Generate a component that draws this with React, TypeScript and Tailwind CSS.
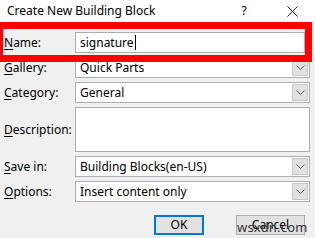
import React from "react";

const font = { fontFamily: '"Noto Sans", "Open Sans", sans-serif' };

function Label({ u, rest }: { u: string; rest: string }) {
  return (
    <div className="w-[71px] shrink-0 text-[12px] text-[#000] leading-none">
      <span className="underline underline-offset-[2px]">{u}</span>
      {rest}
    </div>
  );
}

function Chevron() {
  return (
    <svg width="9" height="5" viewBox="0 0 9 5" className="block">
      <path d="M0.5 0.5 L4.5 4.5 L8.5 0.5" fill="none" stroke="#606060" strokeWidth="1" />
    </svg>
  );
}

function Combo({ value }: { value: string }) {
  return (
    <div className="flex-1 h-[21px] bg-white border border-[#abadb3] flex items-stretch">
      <div className="flex-1 flex items-center pl-[4px] text-[12px] text-black leading-none">{value}</div>
      <div className="w-[16px] m-[1px] bg-[#e1e1e1] border border-[#c6c6c6] flex items-center justify-center">
        <Chevron />
      </div>
    </div>
  );
}

export default function App() {
  return (
    <div className="relative w-[315px] h-[238px] bg-[#f0f0f0] overflow-hidden" style={font}>
      {/* title bar */}
      <div className="h-[22px] bg-white flex items-center pl-[7px] pr-[17px] text-[12px] text-black">
        <div className="flex-1 leading-none">Create New Building Block</div>
        <div className="w-[10px] text-center leading-none mr-[38px]">?</div>
        <svg width="11" height="11" viewBox="0 0 11 11" className="block">
          <path d="M0.5 0.5 L10.5 10.5 M10.5 0.5 L0.5 10.5" stroke="#222" strokeWidth="1" />
        </svg>
      </div>

      <div className="flex flex-col pl-[4px] pr-[5px] pt-[10px] gap-[4px]">
        {/* Name */}
        <div className="flex items-center pr-[5px]">
          <Label u="N" rest="ame:" />
          <div className="flex-1 h-[21px] bg-white border border-[#abadb3] flex items-center pl-[4px] text-[12px] text-black leading-none">
            signature
            <span className="inline-block w-px h-[15px] bg-black ml-px" />
          </div>
        </div>
        {/* Gallery */}
        <div className="flex items-center">
          <Label u="G" rest="allery:" />
          <Combo value="Quick Parts" />
        </div>
        {/* Category */}
        <div className="flex items-center">
          <Label u="C" rest="ategory:" />
          <Combo value="General" />
        </div>
        {/* Description */}
        <div className="flex items-center">
          <Label u="D" rest="escription:" />
          <div className="flex-1 h-[45px] bg-white border border-[#abadb3]" />
        </div>
        {/* Save in */}
        <div className="flex items-center">
          <Label u="S" rest="ave in:" />
          <Combo value="Building Blocks(en-US)" />
        </div>
        {/* Options */}
        <div className="flex items-center">
          <Label u="O" rest="ptions:" />
          <Combo value="Insert content only" />
        </div>
        {/* Buttons */}
        <div className="flex justify-end mt-[9px] pr-[5px] gap-[32px]">
          <div className="w-[50px] h-[20px] bg-[#e1e1e1] border-2 border-[#0078d7] flex items-center justify-center text-[12px] text-black leading-none">
            OK
          </div>
          <div className="w-[69px] h-[20px] bg-[#e1e1e1] border border-[#adadad] flex items-center justify-center text-[12px] text-black leading-none">
            Cancel
          </div>
        </div>
      </div>

      {/* red highlight rectangle */}
      <div className="absolute left-[-4px] top-[22px] w-[316px] h-[40px] border-[7px] border-[#ff0000]" />

      {/* watermark */}
      <div className="absolute left-[237px] top-[221px] text-[13px] leading-none text-[#333] tracking-[0.2px]">
        wsxdn.com
      </div>
    </div>
  );
}
